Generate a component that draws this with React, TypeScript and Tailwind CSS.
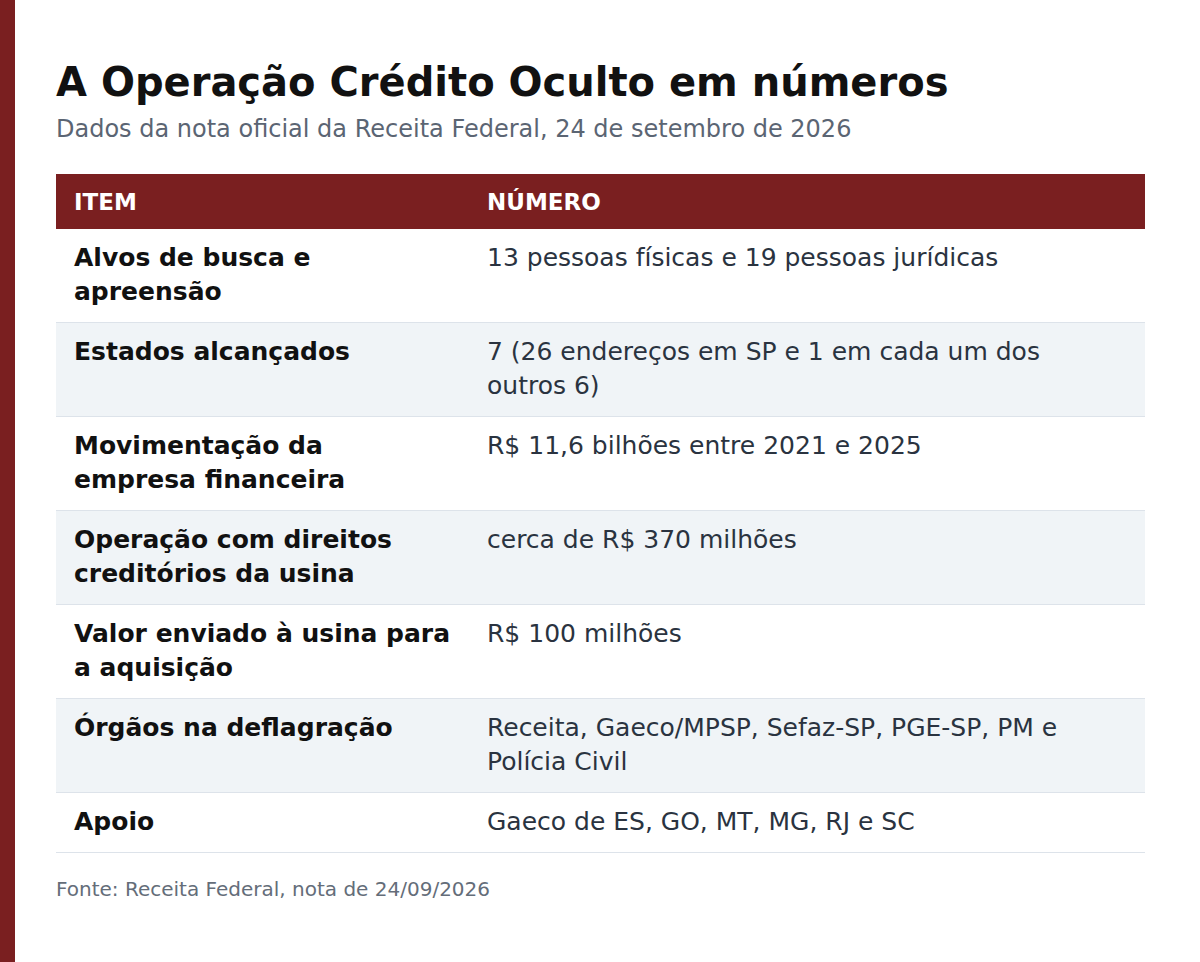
import React from 'react'

const rows = [
  { item: 'Alvos de busca e apreensão', value: '13 pessoas físicas e 19 pessoas jurídicas' },
  { item: 'Estados alcançados', value: '7 (26 endereços em SP e 1 em cada um dos outros 6)' },
  { item: 'Movimentação da empresa financeira', value: 'R$ 11,6 bilhões entre 2021 e 2025' },
  { item: 'Operação com direitos creditórios da usina', value: 'cerca de R$ 370 milhões' },
  { item: 'Valor enviado à usina para a aquisição', value: 'R$ 100 milhões' },
  { item: 'Órgãos na deflagração', value: 'Receita, Gaeco/MPSP, Sefaz-SP, PGE-SP, PM e Polícia Civil' },
  { item: 'Apoio', value: 'Gaeco de ES, GO, MT, MG, RJ e SC' },
]

export default function App() {
  return (
    <div className="min-h-[962px] w-[1200px] bg-white flex font-['DejaVu_Sans',sans-serif]">
      <div className="w-[15px] shrink-0 bg-[#7a1f20]" />
      <main className="flex-1 pl-[41px] pr-[55px] pt-[58px]">
        <h1 className="text-[40px] leading-[48px] font-bold text-[#111111]">A Operação Crédito Oculto em números</h1>
        <p className="mt-[7px] text-[24px] leading-[32px] text-[#5b6573]">Dados da nota oficial da Receita Federal, 24 de setembro de 2026</p>

        <table className="mt-[29px] w-full border-collapse text-[25px] leading-[34px]">
          <thead>
            <tr className="bg-[#7a1f20] text-white">
              <th className="w-[413px] h-[55px] pl-[18px] text-left text-[23px] font-bold uppercase">Item</th>
              <th className="h-[55px] pl-[18px] text-left text-[23px] font-bold uppercase">Número</th>
            </tr>
          </thead>
          <tbody>
            {rows.map((r, i) => (
              <tr key={i} className={`border-b border-[#dde3ea] ${i % 2 === 1 ? 'bg-[#f0f4f7]' : 'bg-white'}`}>
                <td className="align-top pl-[18px] pr-[18px] pt-[12px] pb-[13px] font-bold text-[#111111]">{r.item}</td>
                <td className="align-top pl-[18px] pr-[50px] pt-[12px] pb-[13px] text-[#2a3340]">{r.value}</td>
              </tr>
            ))}
          </tbody>
        </table>

        <p className="mt-[23px] text-[20px] leading-[26px] text-[#646d79]">Fonte: Receita Federal, nota de 24/09/2026</p>
      </main>
    </div>
  )
}
